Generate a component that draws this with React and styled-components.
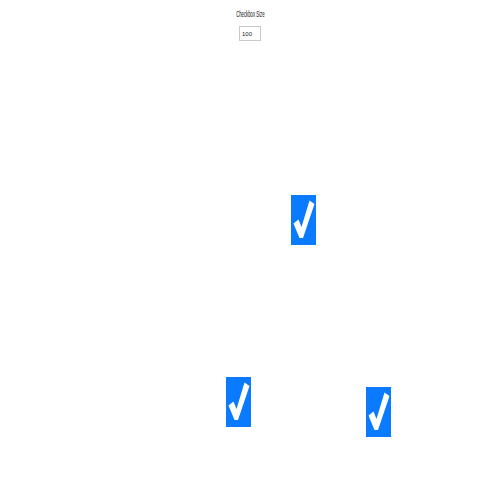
import React, { useState } from "react";
import styled, { createGlobalStyle } from "styled-components";

const GlobalStyle = createGlobalStyle`
  html, body {
    margin: 0;
    padding: 0;
    background: #fff;
    font-family: "Liberation Sans", Arial, sans-serif;
  }
`;

const boxes = [
  { id: 1, x: 291, y: 195 },
  { id: 2, x: 226, y: 377 },
  { id: 3, x: 366, y: 387 },
];

const App = () => {
  const [size, setSize] = useState("100");
  const [checked, setChecked] = useState({ 1: true, 2: true, 3: true });

  return (
    <Page>
      <GlobalStyle />
      <Controls>
        <Label>Checkbox Size</Label>
        <SizeInput value={size} onChange={(e) => setSize(e.target.value)} />
      </Controls>
      {boxes.map((box) => (
        <Box
          key={box.id}
          $x={box.x}
          $y={box.y}
          $on={checked[box.id]}
          onClick={() => setChecked({ ...checked, [box.id]: !checked[box.id] })}
        >
          {checked[box.id] && (
            <svg width="25" height="50" viewBox="0 0 25 50">
              <polygon
                points="2.5,28.5 7.5,24.5 10.5,32 18.5,5.5 23.5,9 12,43 8.5,43"
                fill="#fff"
              />
            </svg>
          )}
        </Box>
      ))}
    </Page>
  );
};

export default App;

const Page = styled.div`
  position: relative;
  width: 500px;
  height: 500px;
  overflow: hidden;
`;

const Controls = styled.div`
  display: flex;
  flex-direction: column;
  align-items: center;
  padding-top: 9px;
  gap: 7px;
`;

const Label = styled.div`
  font-size: 8.5px;
  line-height: 10px;
  color: #111;
  transform: scaleX(0.5);
`;

const SizeInput = styled.input`
  box-sizing: border-box;
  width: 22px;
  height: 15px;
  margin: 0;
  padding: 0 2px;
  border: 1px solid #c8c8c8;
  font-family: "Liberation Sans", Arial, sans-serif;
  font-size: 6px;
  color: #222;
  outline: none;
`;

const Box = styled.div`
  position: absolute;
  left: ${(p) => p.$x}px;
  top: ${(p) => p.$y}px;
  width: 25px;
  height: 50px;
  background: ${(p) => (p.$on ? "#0a7bff" : "#fff")};
  cursor: pointer;

  svg {
    display: block;
  }
`;
